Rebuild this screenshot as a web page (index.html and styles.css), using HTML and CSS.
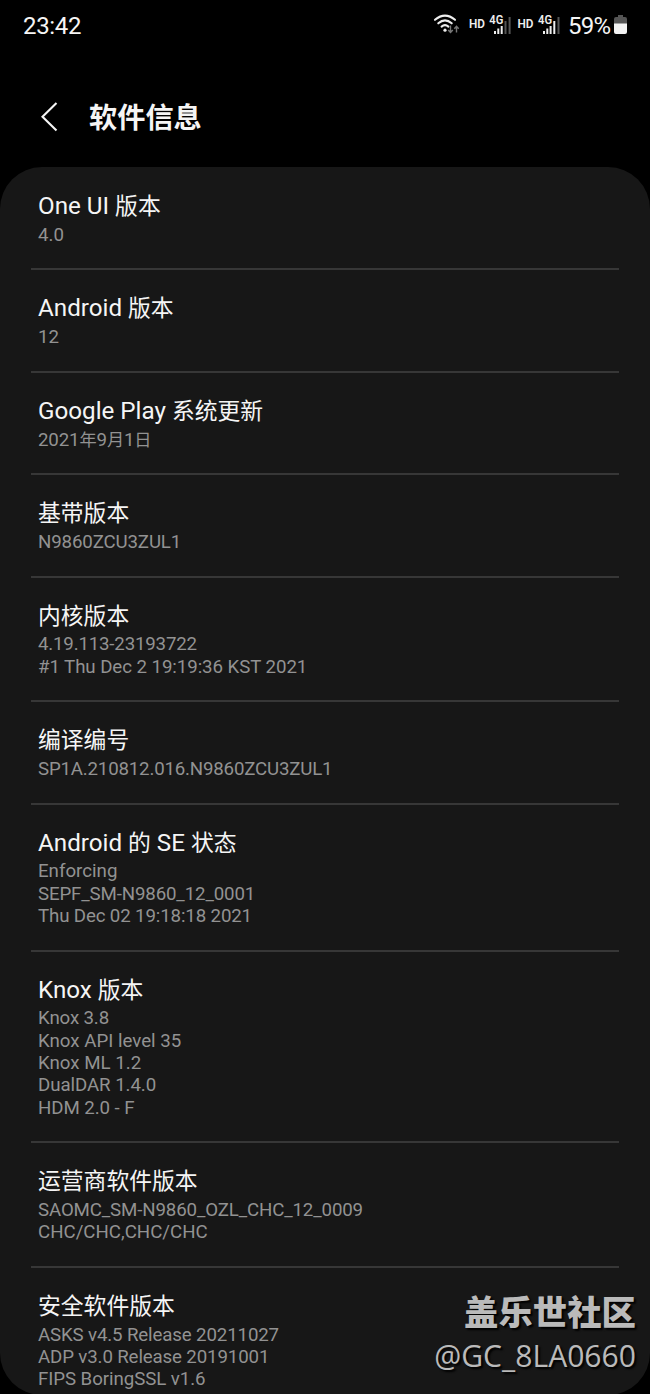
FILE: index.html
```html
<!DOCTYPE html>
<html lang="zh-CN">
<head>
<meta charset="utf-8">
<title>软件信息</title>
<link rel="stylesheet" href="styles.css">
</head>
<body>
<div class="screen">
  <header class="status">
    <span class="clock">23:42</span>
    <svg class="status-icons" width="132" height="30" viewBox="0 0 132 30">
      <g fill="none" stroke="#eee" stroke-width="2.1" stroke-linecap="round">
        <path d="M2 9.8Q12 1.4 22 9.8M5.3 13.3Q12 7.4 18.7 13.3M8.6 16.6Q12 13.8 15.4 16.6"/>
      </g>
      <circle cx="12" cy="20.2" r="1.6" fill="#eee"/>
      <path d="M17.5 15.5v7M15.2 20l2.3 2.5 2.3-2.5M23.5 22.5v-6M21.3 18.7l2.2-2.5 2.2 2.5" fill="none" stroke="#777" stroke-width="1.4"/>
      <g class="signal-text">
        <text x="36" y="18.2" textLength="16" lengthAdjust="spacingAndGlyphs">HD</text>
        <text x="56.3" y="14.2" textLength="14" lengthAdjust="spacingAndGlyphs">4G</text>
        <text x="84.5" y="18.2" textLength="16" lengthAdjust="spacingAndGlyphs">HD</text>
        <text x="105" y="14.2" textLength="14" lengthAdjust="spacingAndGlyphs">4G</text>
      </g>
      <path d="M61 21h2v3h-2zM64.3 18.5h2V24h-2zM67.7 16h2v8h-2zM110 21h2v3h-2zM113.3 18.5h2V24h-2zM116.6 16h2v8h-2zM120.3 11h2v13h-2z" fill="#eee"/>
      <path d="M71.5 11h2v13h-2zM75.6 7h2v17h-2zM124.5 7h2v17h-2z" fill="#555"/>
    </svg>
    <span class="percent">59%</span>
    <svg class="battery" width="13" height="20" viewBox="0 0 13 20">
      <path d="M4 0h5v2h2q2 0 2 2v5H0V4q0-2 2-2h2z" fill="#555"/>
      <path d="M0 8.5h13V17q0 2-2 2H2q-2 0-2-2z" fill="#f2f2f2"/>
    </svg>
  </header>
  <div class="toolbar">
    <svg class="back" width="18" height="30" viewBox="0 0 18 30"><path d="M16.5 1L2.5 14.8 16.5 28.5" fill="none" stroke="#f5f5f5" stroke-width="2.1"/></svg>
    <h1>软件信息</h1>
  </div>
  <main class="card">
    <section class="row"><h2><span class="latin">One UI </span>版本</h2><p>4.0</p></section>
    <section class="row"><h2><span class="latin">Android </span>版本</h2><p>12</p></section>
    <section class="row"><h2><span class="latin">Google Play </span>系统更新</h2><p class="date">2021<span>年</span>9<span>月</span>1<span>日</span></p></section>
    <section class="row"><h2>基带版本</h2><p class="code">N9860ZCU3ZUL1</p></section>
    <section class="row"><h2>内核版本</h2><p class="build">4.19.113-23193722</p><p class="kernel">#1 Thu Dec 2 19:19:36 KST 2021</p></section>
    <section class="row"><h2>编译编号</h2><p class="build">SP1A.210812.016.N9860ZCU3ZUL1</p></section>
    <section class="row"><h2><span class="latin">Android </span>的<span class="latin"> SE </span>状态</h2><p>Enforcing</p><p class="code">SEPF_SM-N9860_12_0001</p><p class="code">Thu Dec 02 19:18:18 2021</p></section>
    <section class="row"><h2><span class="latin">Knox </span>版本</h2><p class="code">Knox 3.8</p><p>Knox API level 35</p><p>Knox ML 1.2</p><p class="kernel">DualDAR 1.4.0</p><p class="kernel">HDM 2.0 - F</p></section>
    <section class="row"><h2>运营商软件版本</h2><p class="code">SAOMC_SM-N9860_OZL_CHC_12_0009</p><p>CHC/CHC,CHC/CHC</p></section>
    <section class="row"><h2>安全软件版本</h2><p class="code">ASKS v4.5 Release 20211027</p><p class="code">ADP v3.0 Release 20191001</p><p class="kernel">FIPS BoringSSL v1.6</p></section>
  </main>
  <div class="watermark"><strong>盖乐世社区</strong><span>@GC_8LA0660</span></div>
</div>
</body>
</html>
```
FILE: styles.css
```css
* { box-sizing: border-box; }
body { margin: 0; background: #000; }
h1, h2, p { margin: 0; font-weight: 400; }
.screen {
  position: relative;
  width: 650px;
  height: 1394px;
  overflow: hidden;
  display: flex;
  flex-direction: column;
  background: #000;
  color: #f5f5f5;
  font-family: Roboto, "Noto Sans CJK SC", sans-serif;
}
.status {
  height: 52px;
  flex: none;
  display: flex;
  align-items: center;
  padding: 0 23px;
}
.clock { font-size: 24px; line-height: 52px; letter-spacing: -.35px; margin-right: auto; }
.status-icons { margin-top: -2px; margin-right: 3px; }
.signal-text { font: 600 12px Roboto, sans-serif; fill: #eee; }
.percent { font-size: 24px; line-height: 52px; letter-spacing: -.8px; width: 44px; margin-right: 2px; }
.battery { margin-top: -2px; }
.toolbar {
  height: 115px;
  flex: none;
  display: flex;
  align-items: center;
  gap: 31px;
  padding: 14px 40px 0;
}
h1 { font-size: 28.2px; line-height: 40px; font-weight: 700; margin-top: 4px; }
.card {
  height: 1228px;
  flex: none;
  overflow: hidden;
  padding: 1px 31px 0;
  border-radius: 42px;
  background: #171717;
}
.row {
  padding: 24px 7px 22.2px;
  border-bottom: 2px solid #373737;
}
.row:last-child { border-bottom: 0; }
h2 { font-size: 22.8px; line-height: 30.8px; height: 31.9px; white-space: nowrap; }
.latin { font-size: 24.2px; line-height: 1; white-space: pre; }
p { font-size: 18.7px; line-height: 22.3px; height: 22.3px; color: #929292; white-space: nowrap; }
.code { letter-spacing: -.14px; }
.kernel { letter-spacing: -.07px; }
.build { letter-spacing: -.19px; }
.date { letter-spacing: -.14px; }
.date span { font-size: 17.2px; line-height: 1; }
.watermark {
  position: absolute;
  right: 14px;
  top: 1285px;
  display: flex;
  flex-direction: column;
  align-items: flex-end;
  color: #bababa;
  text-shadow: 2px 2px 2px #000;
}
.watermark strong { font: 900 34.4px/50px "Noto Sans CJK SC", sans-serif; }
.watermark span { font: 400 30.1px/42px "Open Sans", "Noto Sans", sans-serif; }
```
